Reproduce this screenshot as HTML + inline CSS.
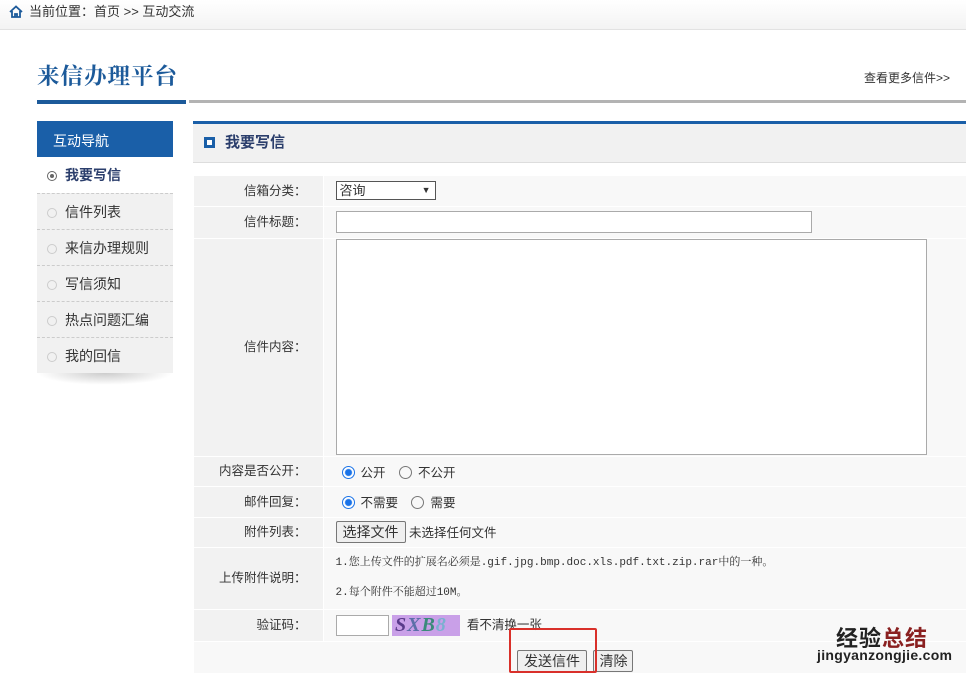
<!DOCTYPE html>
<html><head><meta charset="utf-8"><style>
*{margin:0;padding:0;box-sizing:border-box}
body{width:966px;height:673px;overflow:hidden;background:#fff;font-family:"Liberation Sans","Noto Sans CJK SC",sans-serif;font-size:13px;color:#333;position:relative}
.crumb{position:absolute;left:0;top:0;width:966px;height:30px;background:linear-gradient(#fff,#f3f3f3);border-bottom:1px solid #e2e2e2;font-size:13px;line-height:24px;padding-left:29px;color:#333}
.title{position:absolute;left:37px;top:59px;font-size:22.5px;font-weight:bold;color:#1c5a9a;font-family:"Noto Serif CJK SC",serif;letter-spacing:1px}
.more{position:absolute;left:864px;top:69px;font-size:12px;color:#333}
.line1{position:absolute;left:37px;top:100px;width:149px;height:4px;background:#1c5a9a}
.line2{position:absolute;left:189px;top:100px;width:777px;height:3px;background:#b3b3b3}
.nav{position:absolute;left:37px;top:121px;width:136px}
.navh{height:36px;background:#1a5fa8;color:#fff;font-size:14px;line-height:40px;padding-left:16px}
.it{height:36px;line-height:36px;padding-left:28px;font-size:14px;background:#f1f1f1;border-top:1px dashed #ccc;position:relative;color:#333}
.it:before{content:"";position:absolute;left:10px;top:14px;width:8px;height:8px;border:1px solid #ccc;border-radius:50%}
.it.a{background:#fff;border-top:none;font-weight:bold;color:#2b3e6c}
.it.a:before{border-color:#666;width:8px;height:8px}
.it.a:after{content:"";position:absolute;left:13px;top:17px;width:4px;height:4px;border-radius:50%;background:#666}
.shadow{height:12px;background:radial-gradient(ellipse at top,#ccc,#fff 70%)}
.ph{position:absolute;left:193px;top:121px;width:773px;height:42px;background:#f1f1f1;border-top:3px solid #1a5fa8;border-bottom:1px solid #ddd;font-size:15px;font-weight:bold;color:#2b3e6c;line-height:38px;padding-left:32px}
.ph:before{content:"";position:absolute;left:11px;top:13px;width:11px;height:11px;background:#1a5fa8;border:0}
.ph:after{content:"";position:absolute;left:14px;top:16px;width:5px;height:5px;background:#fff}
table{position:absolute;left:194px;top:176px;width:772px;border-collapse:collapse}
td{border-bottom:1px solid #fff;font-size:12.5px;vertical-align:middle}
td.l{width:129px;background:#f2f2f2;text-align:right;padding-right:16px;border-right:1px solid #fff;padding-bottom:3px}
td.r{background:#f8f8f8;padding-left:12px}
.inp{border:1px solid #aaa;background:#fff;height:22px}
.rad{display:inline-block;width:13px;height:13px;border:1px solid #777;border-radius:50%;vertical-align:-2px;margin:0 6px 0 6px}
.rad.on{border:1px solid #1a73e8;background:radial-gradient(#1a73e8 3px,#fff 4px)}
.btn{display:inline-block;border:1px solid #777;background:#efefef;border-radius:2px;padding:0 6px;height:22px;line-height:20px;font-size:14px}
.mono{font-family:"Liberation Mono","Noto Serif CJK SC",monospace;font-size:11px}
</style></head><body>
<div class="crumb"><svg style="position:absolute;left:9px;top:5px" width="14" height="13" viewBox="0 0 14 13"><path d="M1 7 L7 1.5 L13 7 M3 6 V12 H11 V6 M6 12 V9 H8 V12" fill="none" stroke="#1c5a9a" stroke-width="1.8"/></svg>当前位置：首页 &gt;&gt; 互动交流</div>
<div class="title">来信办理平台</div>
<div class="more">查看更多信件&gt;&gt;</div>
<div class="line1"></div><div class="line2"></div>
<div class="nav"><div class="navh">互动导航</div>
<div class="it a">我要写信</div><div class="it">信件列表</div><div class="it">来信办理规则</div><div class="it">写信须知</div><div class="it">热点问题汇编</div><div class="it">我的回信</div><div class="shadow"></div></div>
<div class="ph">我要写信</div>
<table>
<tr style="height:30px"><td class="l">信箱分类：</td><td class="r"><span class="inp" style="display:inline-block;width:100px;height:19px;border-color:#555;line-height:17px;padding-left:3px;font-size:13px;position:relative">咨询<span style="position:absolute;right:4px;top:0;font-size:9px">&#9660;</span></span></td></tr>
<tr style="height:32px"><td class="l">信件标题：</td><td class="r"><div class="inp" style="width:476px"></div></td></tr>
<tr style="height:218px"><td class="l">信件内容：</td><td class="r"><div class="inp" style="width:591px;height:216px"></div></td></tr>
<tr style="height:30px"><td class="l">内容是否公开：</td><td class="r"><span class="rad on"></span>公开 <span class="rad" style="margin-left:10px"></span>不公开</td></tr>
<tr style="height:31px"><td class="l">邮件回复：</td><td class="r"><span class="rad on"></span>不需要 <span class="rad" style="margin-left:10px"></span>需要</td></tr>
<tr style="height:30px"><td class="l">附件列表：</td><td class="r"><span class="btn">选择文件</span> 未选择任何文件</td></tr>
<tr style="height:62px"><td class="l">上传附件说明：</td><td class="r mono" style="line-height:30px">1.您上传文件的扩展名必须是.gif.jpg.bmp.doc.xls.pdf.txt.zip.rar中的一种。<br>2.每个附件不能超过10M。</td></tr>
<tr style="height:32px"><td class="l">验证码：</td><td class="r"><span class="inp" style="display:inline-block;width:53px;height:21px;vertical-align:middle"></span> <span style="display:inline-block;width:68px;height:21px;background:#c9a0e8;vertical-align:middle;font:italic bold 20px 'Liberation Serif',serif;line-height:21px;padding-left:3px;letter-spacing:1px"><span style="color:#5a3a8a">S</span><span style="color:#5b6fa8">X</span><span style="color:#3a8a7a">B</span><span style="color:#7ab0d0">8</span></span> &nbsp;看不清换一张</td></tr>
<tr style="height:32px"><td class="l" style="background:#f8f8f8;border-right:none"></td><td class="r" style="padding-left:194px;padding-top:8px"><span class="btn">发送信件</span> <span class="btn" style="padding:0 5px;margin-left:3px">清除</span></td></tr>
</table>
<div style="position:absolute;left:509px;top:628px;width:88px;height:45px;border:2px solid #d9302a;border-radius:2px"></div>
<div style="position:absolute;left:836px;top:621px;font-size:22px;font-weight:bold;color:#222;letter-spacing:1px">经验<span style="color:#8a2020">总结</span></div>
<div style="position:absolute;left:817px;top:647px;font-size:14px;font-weight:bold;color:#222;letter-spacing:0.3px">jingyanzongjie.com</div>
</body></html>
